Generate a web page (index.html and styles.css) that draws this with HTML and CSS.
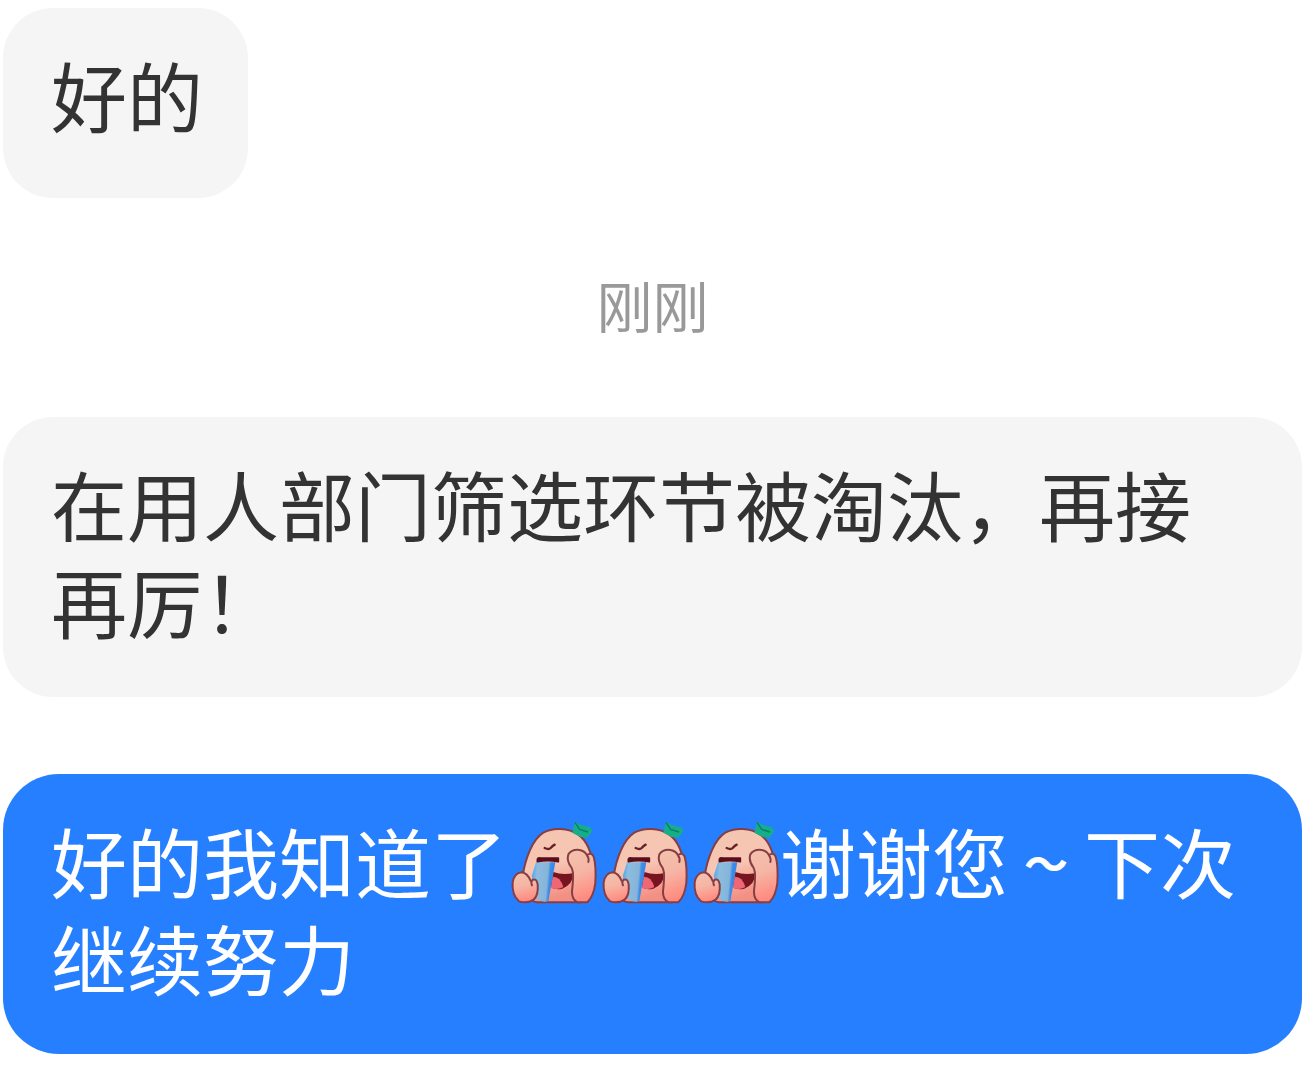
FILE: index.html
```
<!DOCTYPE html>
<html lang="zh-CN">
<head>
	<title>聊天</title>
	<meta charset="utf-8">
	<meta name="viewport" content="width=device-width, initial-scale=1">
	<link rel="stylesheet" href="styles.css">
</head>
<body>
	<!-- crying peach, reused in the messages -->
	<svg class="defs" aria-hidden="true">
		<defs>
			<linearGradient id="skin" x1="0" y1="0" x2="0.3" y2="1">
				<stop offset="0" stop-color="#f3c5af"/>
				<stop offset="0.55" stop-color="#f7c6b4"/>
				<stop offset="1" stop-color="#f38f83"/>
			</linearGradient>
			<linearGradient id="hand" x1="0" y1="0" x2="0.2" y2="1">
				<stop offset="0" stop-color="#f2c3ad"/>
				<stop offset="0.5" stop-color="#f6b5a5"/>
				<stop offset="1" stop-color="#ff8b7f"/>
			</linearGradient>
			<linearGradient id="tear" x1="0" y1="0" x2="1" y2="0.15">
				<stop offset="0" stop-color="#4aa0ee"/>
				<stop offset="0.25" stop-color="#8bbde0"/>
				<stop offset="0.7" stop-color="#86b4d8"/>
				<stop offset="0.8" stop-color="#3b8de8"/>
				<stop offset="1" stop-color="#3585e8"/>
			</linearGradient>
		</defs>
		<symbol id="peach" viewBox="21 18 273 273">
			<path d="M68 192C76 138 98 82 130 62C158 46 205 47 235 68C262 88 276 124 279 168L276 244Q270 271 242 271H110Q75 265 68 192Z" fill="url(#skin)" stroke="#873e43" stroke-width="6"/>
			<path d="M217 62L225 29L244 40L269 45L277 57L262 77L242 75Z" fill="#16ae86"/>
			<path d="M225 31L239 52L264 60" fill="none" stroke="#087c70" stroke-width="4"/>
			<path d="M134 108Q146 114 152 108Q158 101 164 98" fill="none" stroke="#672127" stroke-width="7" stroke-linecap="round"/>
			<path d="M160 180Q187 190 222 183Q218 218 187 230Q165 235 151 224Z" fill="#76151f"/>
			<path d="M158 194Q181 193 190 225Q174 235 152 228Z" fill="#ef6675"/>
			<path d="M108 151H166L145 268Q127 273 111 260L98 216L96 190Z" fill="url(#tear)"/>
			<path d="M112 149V142Q113 136 122 138H175V149Q143 143 112 149Z" fill="#590f1c" stroke="#590f1c" stroke-width="5" stroke-linejoin="round"/>
			<path d="M92 207Q83 184 65 181Q43 183 38 211Q35 249 57 268Q82 276 101 263Q116 249 113 217Q110 199 99 203Q91 208 96 220" fill="url(#hand)" stroke="#873e43" stroke-width="6" stroke-linecap="round"/>
			<path d="M214 166Q199 147 205 127Q216 111 239 114Q255 117 261 130Q274 119 281 134Q289 162 286 213Q281 253 262 271H233Q215 263 216 237Q220 205 219 183Q217 171 214 166Z" fill="url(#hand)"/>
			<path d="M214 166Q199 147 205 127Q216 111 239 114Q255 117 261 130Q268 139 265 150M261 129Q274 119 281 134Q289 162 286 213Q281 253 262 271H233Q215 263 216 237Q220 205 219 183Q217 171 214 166" fill="none" stroke="#873e43" stroke-width="6" stroke-linecap="round"/>
		</symbol>
	</svg>

	<main class="chat">
		<div class="bubble">好的</div>
		<time class="time">刚刚</time>
		<div class="bubble">在用人部门筛选环节被淘汰，再接再厉！</div>
		<div class="bubble mine">好的我知道了<svg class="emoji"><use href="#peach"/></svg><svg class="emoji"><use href="#peach"/></svg><svg class="emoji"><use href="#peach"/></svg>谢谢您<span class="tilde">～</span>下次继续努力</div>
	</main>
</body>
</html>
```
FILE: styles.css
```
* {
	box-sizing: border-box;
}
body {
	margin: 0;
	background-color: #fff;
	font-family: "Noto Sans CJK SC", sans-serif;
}
.defs {
	position: absolute;
	width: 0;
	height: 0;
}
.chat {
	display: flex;
	flex-direction: column;
	align-items: flex-start;
	gap: 77px;
	padding: 8px 5px 24px 3px;
}
.bubble {
	min-height: 190px;
	padding: 38px 45px 48px 48px;
	border-radius: 50px;
	background-color: #f5f5f5;
	color: #333;
	font-size: 76px;
	line-height: 97px;
}
.mine {
	align-self: flex-end;
	background-color: #267fff;
	color: #fff;
	border-radius: 56px;
}
.time {
	align-self: center;
	padding-bottom: 8px;
	color: #999;
	font-size: 56px;
	line-height: 57px;
}
.emoji {
	width: 91px;
	height: 91px;
	vertical-align: -16px;
}
.tilde {
	display: inline-block;
	width: 76px;
	font-size: 44px;
	font-weight: bold;
	line-height: 44px;
	text-align: center;
	vertical-align: 12px;
}
```
